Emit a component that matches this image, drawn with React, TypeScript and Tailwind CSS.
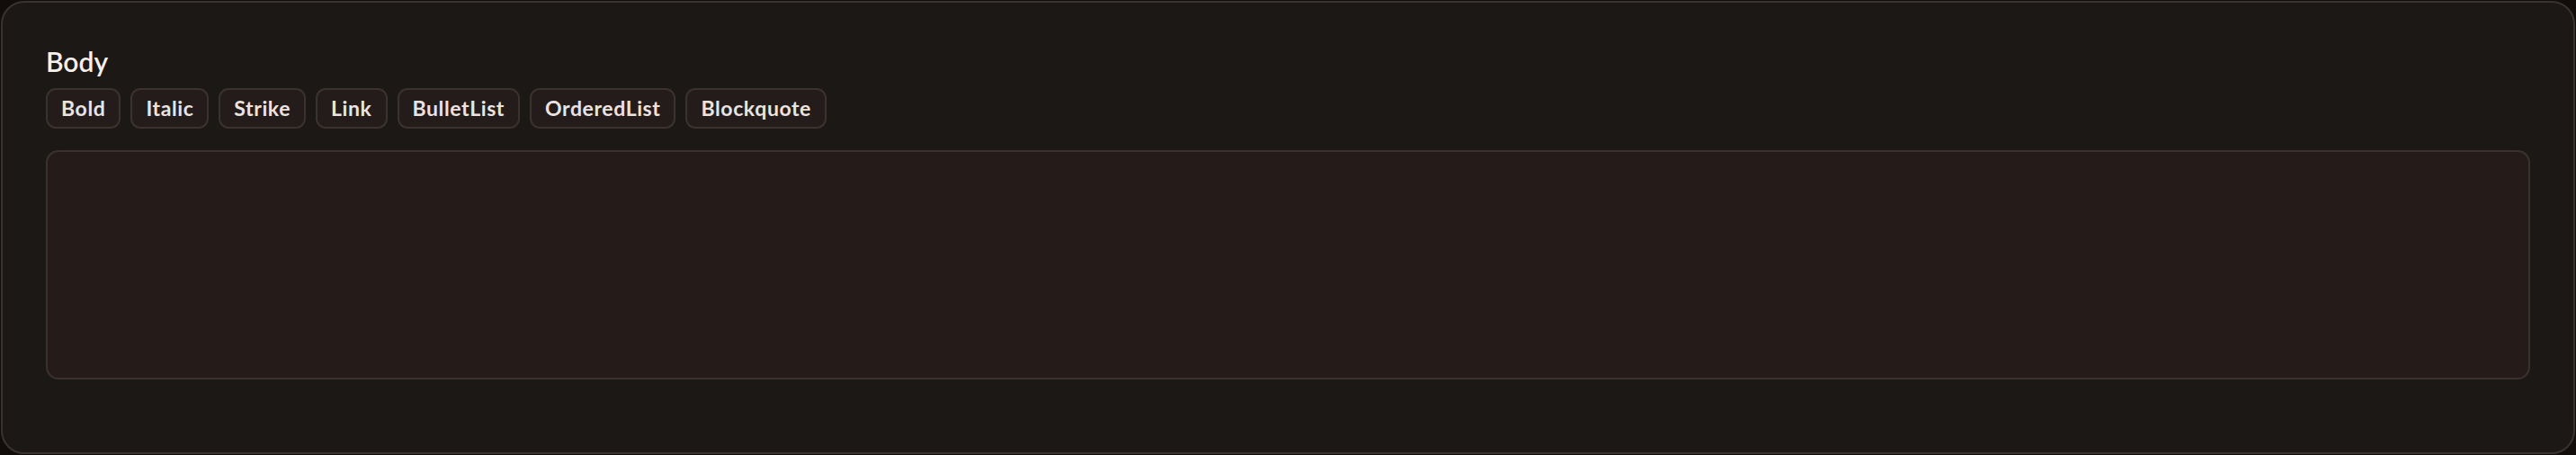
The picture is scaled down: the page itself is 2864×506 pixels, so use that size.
import * as React from "react"

const tools = [
  "Bold",
  "Italic",
  "Strike",
  "Link",
  "BulletList",
  "OrderedList",
  "Blockquote",
]

function ToolButton({ label }: { label: string }) {
  return (
    <button
      type="button"
      className="flex h-[45px] items-center rounded-[11px] border-2 border-[#3b322f] bg-[#241c1a] px-[15px] text-[23px] font-bold tracking-[0.6px] text-[#ece3e0]"
    >
      {label}
    </button>
  )
}

export default function App() {
  return (
    <div
      className="h-[506px] w-full bg-[#110d0b] p-px"
      style={{ fontFamily: "Lato, 'Noto Sans', sans-serif" }}
    >
      <div className="flex h-[504px] flex-col rounded-[26px] border-2 border-[#3a3230] bg-[#1c1815] px-[48px] pt-[47px]">
        <h2 className="text-[30px] leading-[36px] font-semibold text-[#f5efed]">
          Body
        </h2>
        <div className="mt-[12px] flex gap-[11px]">
          {tools.map((t) => (
            <ToolButton key={t} label={t} />
          ))}
        </div>
        <div className="mt-[24px] h-[255px] rounded-[14px] border-2 border-[#3a3130] bg-[#251c1a]" />
      </div>
    </div>
  )
}
